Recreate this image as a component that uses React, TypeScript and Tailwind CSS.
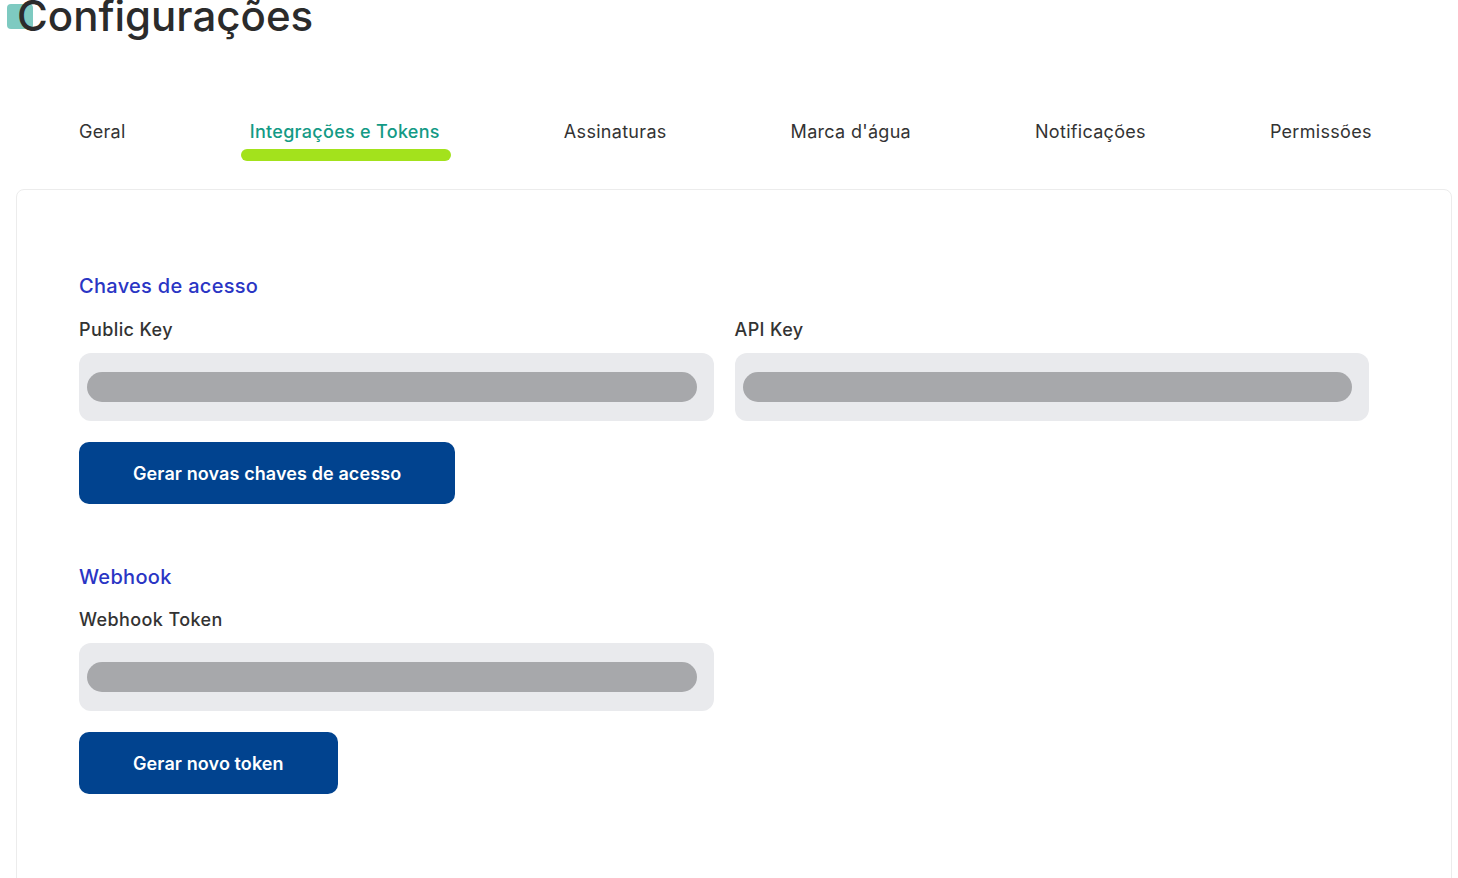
import { useState } from 'react';

const tabs = ['Geral', 'Integrações e Tokens', 'Assinaturas', "Marca d'água", 'Notificações', 'Permissões'];

function SecretField({ label }: { label: string }) {
  return (
    <div className="flex flex-col">
      <span className="text-[18px] leading-[22px] font-medium tracking-[0.4px] text-[#333333]">{label}</span>
      <div className="mt-[12px] h-[68px] rounded-[12px] bg-[#e9eaed] px-[8px] flex items-center">
        <div className="h-[30px] w-full mr-[9px] rounded-full bg-[#a7a8ab]" />
      </div>
    </div>
  );
}

export default function App() {
  const [active, setActive] = useState(1);

  return (
    <div className="min-h-screen bg-white font-['Inter',sans-serif] text-[#333333] overflow-hidden">
      {/* Title */}
      <div className="relative h-[48px] pl-[17px]">
        <div className="absolute left-[7px] top-[12px] h-[25px] w-[26px] rounded-[4px] bg-[#7ecac1]" />
        <h1 className="relative -mt-[8px] text-[42px] leading-[48px] font-medium text-[#2b2b2b]">Configurações</h1>
      </div>

      {/* Tabs */}
      <div className="mt-[81px] flex gap-[104px] pl-[69px]">
        {tabs.map((t, i) => (
          <button
            key={t}
            onClick={() => setActive(i)}
            className="flex flex-col items-stretch px-[10px]"
          >
            <span
              className={
                'text-[18px] leading-[22px] tracking-[0.3px] whitespace-nowrap ' +
                (i === active ? 'text-[#139a85] font-medium' : 'text-[#333333]')
              }
            >
              {t}
            </span>
            <span
              className={
                'mt-[6px] h-[12px] -ml-[9px] -mr-[11px] rounded-full ' +
                (i === active ? 'bg-[#a3e21c]' : 'bg-transparent')
              }
            />
          </button>
        ))}
      </div>

      {/* Card */}
      <div className="ml-[16px] mr-[6px] mt-[28px] h-[720px] rounded-[8px] border border-[#ececec] bg-white pl-[62px] pr-[82px] pt-[83px]">
        <h2 className="text-[20px] leading-[26px] font-medium tracking-[0.3px] text-[#2a35c4]">Chaves de acesso</h2>
        <div className="mt-[20px] grid grid-cols-2 gap-[21px]">
          <SecretField label="Public Key" />
          <SecretField label="API Key" />
        </div>
        <button className="mt-[21px] h-[62px] rounded-[10px] bg-[#01438f] px-[54px] text-[18px] font-semibold tracking-[0.1px] text-white">
          Gerar novas chaves de acesso
        </button>

        <h2 className="mt-[60px] text-[20px] leading-[26px] font-medium tracking-[0.3px] text-[#2a35c4]">Webhook</h2>
        <div className="mt-[19px] grid grid-cols-2 gap-[21px]">
          <SecretField label="Webhook Token" />
        </div>
        <button className="mt-[21px] h-[62px] rounded-[10px] bg-[#01438f] px-[54px] text-[18px] font-semibold tracking-[0.1px] text-white">
          Gerar novo token
        </button>
      </div>
    </div>
  );
}
